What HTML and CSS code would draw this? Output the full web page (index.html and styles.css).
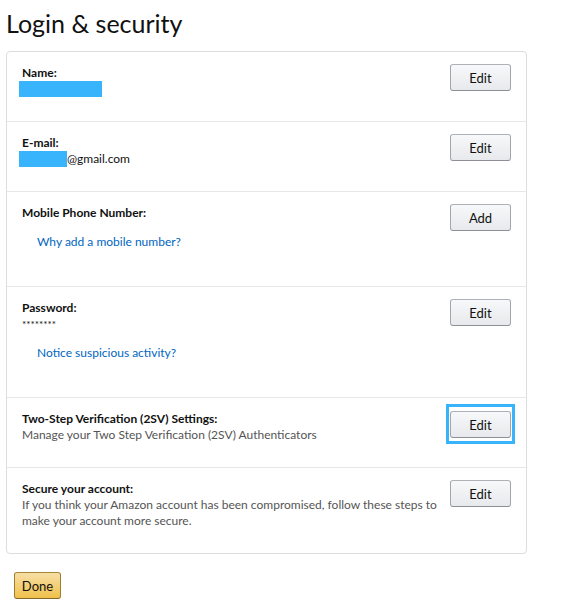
FILE: index.html
```html
<!DOCTYPE html>
<html lang="en">
<head>
  <meta charset="UTF-8" />
  <meta name="viewport" content="width=device-width, initial-scale=1.0"/>
  <title>Login &amp; security</title>
  <link rel="stylesheet" href="styles.css">
</head>
<body>

  <div class="page">
    <h1>Login &amp; security</h1>

    <div class="card">

      <!-- Name -->
      <div class="row">
        <div class="info">
          <div class="label">Name:</div>
          <span class="mask mask-name"></span>
        </div>
        <button class="btn">Edit</button>
      </div>

      <!-- E-mail -->
      <div class="row">
        <div class="info">
          <div class="label">E-mail:</div>
          <div class="value"><span class="mask mask-email"></span>@gmail.com</div>
        </div>
        <button class="btn">Edit</button>
      </div>

      <!-- Mobile -->
      <div class="row">
        <div class="info">
          <div class="label">Mobile Phone Number:</div>
          <a class="link" href="#">Why add a mobile number?</a>
        </div>
        <button class="btn">Add</button>
      </div>

      <!-- Password -->
      <div class="row">
        <div class="info">
          <div class="label">Password:</div>
          <div class="value stars">********</div>
          <a class="link" href="#">Notice suspicious activity?</a>
        </div>
        <button class="btn">Edit</button>
      </div>

      <!-- 2SV -->
      <div class="row">
        <div class="info">
          <div class="label">Two-Step Verification (2SV) Settings:</div>
          <div class="desc">Manage your Two Step Verification (2SV) Authenticators</div>
        </div>
        <span class="focus-ring"><button class="btn">Edit</button></span>
      </div>

      <!-- Secure -->
      <div class="row">
        <div class="info">
          <div class="label">Secure your account:</div>
          <div class="desc">If you think your Amazon account has been compromised, follow these steps to make your account more secure.</div>
        </div>
        <button class="btn">Edit</button>
      </div>

    </div>

    <button class="btn-done">Done</button>
  </div>

</body>
</html>
```

FILE: styles.css
```css
body {
  margin: 0;
  padding: 0;
  background: #fff;
  font-family: Lato, 'Open Sans', sans-serif;
  font-size: 12px;
  line-height: 16px;
  color: #111;
}

.page {
  width: 521px;
  padding: 0 6px;
}

h1 {
  margin: 0;
  padding: 8px 0 13px;
  font-size: 25px;
  font-weight: 400;
  line-height: 30px;
  color: #111;
}

.card {
  border: 1px solid #ddd;
  border-radius: 4px;
}

.row {
  display: flex;
  justify-content: space-between;
  align-items: flex-start;
  gap: 12px;
  padding: 13px 15px 24px;
  border-top: 1px solid #e7e7e7;
}

.row:first-child {
  border-top: none;
}

.info {
  flex: 1;
}

.label {
  font-weight: bold;
}

.mask {
  display: inline-block;
  height: 16px;
  background-color: #38b4fc;
  vertical-align: top;
}

.mask-name {
  display: block;
  width: 83px;
  margin-left: -3px;
}

.mask-email {
  width: 48px;
  margin-left: -3px;
}

.stars {
  font-size: 10px;
}

.desc {
  color: #555;
}

.link {
  display: block;
  padding: 13px 0 12px 15px;
  color: #0066c0;
  text-decoration: none;
}

.btn {
  flex-shrink: 0;
  width: 61px;
  height: 27px;
  margin-top: -1px;
  padding: 0;
  border: 1px solid #adb1b8;
  border-color: #adb1b8 #a2a6ac #8d9096;
  border-radius: 3px;
  background: linear-gradient(to bottom, #f7f8fa, #e7e9ec);
  font-family: inherit;
  font-size: 13px;
  color: #111;
  cursor: pointer;
}

.focus-ring {
  display: block;
  flex-shrink: 0;
  margin: -7px -4px -6px;
  padding: 4px 1px 3px;
  border: 3px solid #38b4fc;
}

.focus-ring .btn {
  display: block;
  margin-top: 0;
}

.btn-done {
  margin: 18px 0 0 8px;
  width: 47px;
  height: 27px;
  padding: 0;
  border: 1px solid #a88734;
  border-color: #a88734 #9c7e31 #846a29;
  border-radius: 3px;
  background: linear-gradient(to bottom, #f7dfa5, #f0c14b);
  font-family: inherit;
  font-size: 13px;
  color: #111;
  cursor: pointer;
}
```
